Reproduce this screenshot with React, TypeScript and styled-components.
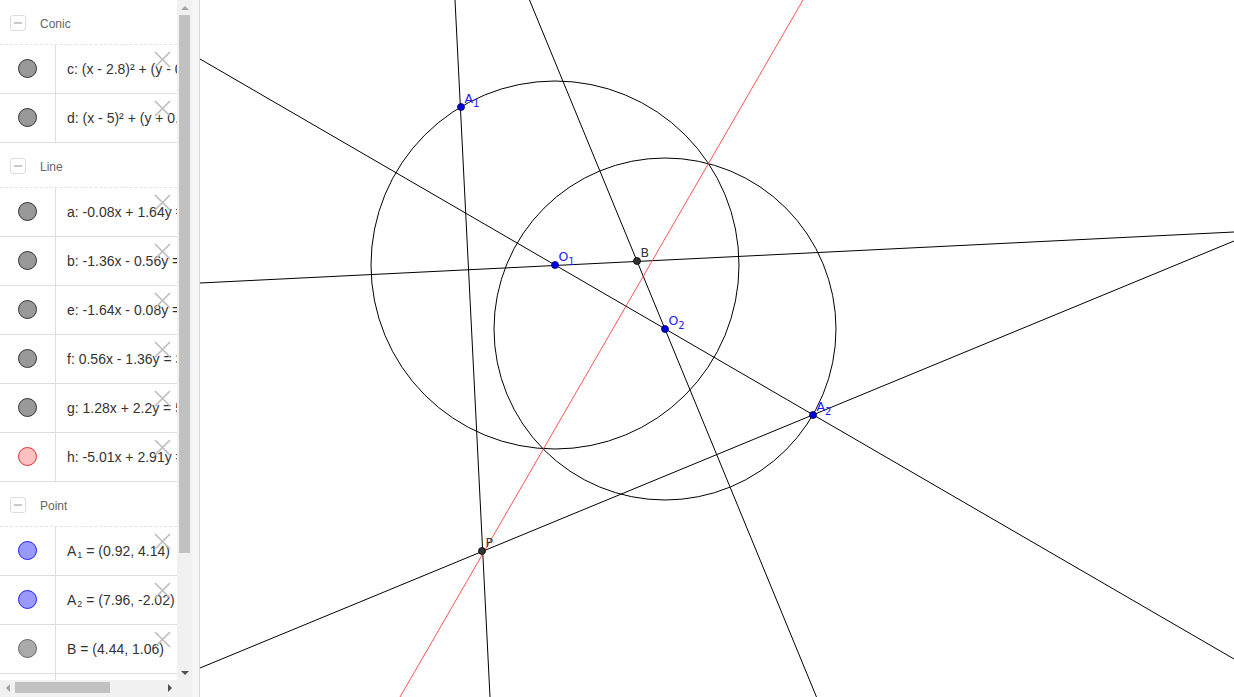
import React from "react";
import styled, { createGlobalStyle } from "styled-components";

const GlobalStyle = createGlobalStyle`
  html, body { margin: 0; padding: 0; background: #fff; }
  body { font-family: "Liberation Sans", Arial, sans-serif; overflow: hidden; }
  #root { width: 1234px; height: 697px; }
`;

const Page = styled.div`
  display: flex;
  width: 1234px;
  height: 697px;
  overflow: hidden;
  background: #fff;
`;

const Sidebar = styled.aside`
  display: flex;
  flex: 0 0 200px;
  height: 100%;
`;

const ListColumn = styled.div`
  display: flex;
  flex-direction: column;
  width: 177px;
  height: 100%;
`;

const ListViewport = styled.div`
  flex: 1;
  overflow: hidden;
  background: #fff;
`;

const GroupHeader = styled.div`
  display: flex;
  align-items: center;
  height: 44px;
  border-bottom: 1px dashed #e2e2e2;
  padding-left: 10px;
  gap: 14px;
  box-sizing: content-box;
`;

const CollapseBox = styled.span`
  position: relative;
  width: 14px;
  height: 14px;
  border: 1px solid #dcdcdc;
  border-radius: 3px;
  margin-top: 2px;
  &::after {
    content: "";
    position: absolute;
    left: 3px;
    right: 3px;
    top: 6px;
    height: 2px;
    background: #c8c8c8;
  }
`;

const GroupTitle = styled.span`
  font-size: 12px;
  color: #666;
  margin-top: 3px;
`;

const Row = styled.div`
  position: relative;
  display: grid;
  grid-template-columns: 56px 1fr;
  height: 48px;
  border-bottom: 1px solid #dedede;
  box-sizing: content-box;
`;

const MarkerCell = styled.div`
  display: flex;
  align-items: center;
  justify-content: center;
  border-right: 1px solid #dedede;
  padding-bottom: 2px;
`;

const Marker = styled.span<{ $fill: string; $stroke: string }>`
  width: 17px;
  height: 17px;
  border-radius: 50%;
  background: ${(p) => p.$fill};
  border: 1px solid ${(p) => p.$stroke};
`;

const Formula = styled.div`
  display: flex;
  align-items: center;
  padding-left: 11px;
  font-size: 14px;
  color: #333;
  white-space: nowrap;
  overflow: hidden;
`;

const FormulaText = styled.span`
  white-space: pre;
  sub {
    font-size: 9px;
    vertical-align: -2px;
    margin-left: 1px;
    line-height: 0;
  }
`;

const DeleteIcon = styled.svg`
  position: absolute;
  top: 6px;
  right: 6px;
  width: 17px;
  height: 17px;
`;

const HScroll = styled.div`
  display: flex;
  align-items: flex-start;
  height: 17px;
  background: #f1f1f1;
  padding-top: 2px;
  box-sizing: border-box;
`;

const HArrow = styled.div<{ $dark?: boolean; $dir: "left" | "right" }>`
  width: 15px;
  height: 11px;
  display: flex;
  align-items: center;
  justify-content: center;
  &::before {
    content: "";
    border-top: 4px solid transparent;
    border-bottom: 4px solid transparent;
    ${(p) =>
      p.$dir === "left"
        ? `border-right: 4px solid ${p.$dark ? "#505050" : "#a3a3a3"};`
        : `border-left: 4px solid ${p.$dark ? "#505050" : "#a3a3a3"};`}
  }
`;

const HThumb = styled.div`
  width: 95px;
  height: 11px;
  background: #c1c1c1;
`;

const HSpacer = styled.div`
  flex: 1;
`;

const VScroll = styled.div`
  display: flex;
  flex-direction: column;
  align-items: center;
  width: 15px;
  height: 100%;
  background: #f1f1f1;
`;

const VArrow = styled.div<{ $dark?: boolean; $dir: "up" | "down" }>`
  width: 15px;
  height: 15px;
  display: flex;
  align-items: center;
  justify-content: center;
  &::before {
    content: "";
    border-left: 4px solid transparent;
    border-right: 4px solid transparent;
    ${(p) =>
      p.$dir === "up"
        ? `border-bottom: 4px solid ${p.$dark ? "#505050" : "#a3a3a3"};`
        : `border-top: 4px solid ${p.$dark ? "#505050" : "#a3a3a3"};`}
  }
`;

const VThumb = styled.div`
  width: 11px;
  height: 538px;
  background: #c1c1c1;
`;

const VSpacer = styled.div`
  flex: 1;
`;

const VCorner = styled.div`
  height: 17px;
`;

const Gutter = styled.div`
  width: 7px;
  height: 100%;
  background: #f7f7f7;
  border-right: 1px solid #d6d6d6;
`;

const Canvas = styled.main`
  flex: 1;
  height: 100%;
  position: relative;
  svg {
    display: block;
  }
`;

type Item = {
  text: React.ReactNode;
  fill: string;
  stroke: string;
};

const GRAY = { fill: "#999999", stroke: "#333333" };
const RED = { fill: "#ffc0c0", stroke: "#e03030" };
const BLUE = { fill: "#9999ff", stroke: "#2020ff" };
const LGRAY = { fill: "#aaaaaa", stroke: "#666666" };

const groups: { title: string; items: Item[] }[] = [
  {
    title: "Conic",
    items: [
      { text: "c: (x - 2.8)² + (y - 0.98)² = 13.5", ...GRAY },
      { text: "d: (x - 5)² + (y + 0.3)² = 11.72", ...GRAY },
    ],
  },
  {
    title: "Line",
    items: [
      { text: "a: -0.08x + 1.64y = 1.39", ...GRAY },
      { text: "b: -1.36x - 0.56y = -6.63", ...GRAY },
      { text: "e: -1.64x - 0.08y = -4.67", ...GRAY },
      { text: "f: 0.56x - 1.36y = 3.21", ...GRAY },
      { text: "g: 1.28x + 2.2y = 5.74", ...GRAY },
      { text: "h: -5.01x + 2.91y = -9.42", ...RED },
    ],
  },
  {
    title: "Point",
    items: [
      { text: <>A<sub>1</sub> = (0.92, 4.14)</>, ...BLUE },
      { text: <>A<sub>2</sub> = (7.96, -2.02)</>, ...BLUE },
      { text: "B = (4.44, 1.06)", ...LGRAY },
      { text: <>O<sub>1</sub> = (2.8, 0.98)</>, ...BLUE },
    ],
  },
];

const Cross = () => (
  <DeleteIcon viewBox="0 0 17 17">
    <path d="M1 1 L16 16 M16 1 L1 16" stroke="#bdbdbd" strokeWidth="1.6" fill="none" />
  </DeleteIcon>
);

const lines: [number, number, number, number, string][] = [
  [455, 0, 490, 697, "#000"],
  [529.5, 0, 816.5, 697, "#000"],
  [200, 59, 1234, 659, "#000"],
  [200, 283, 1234, 232, "#000"],
  [200, 668, 1234, 241, "#000"],
  [803, 0, 400, 697, "#ff4040"],
];

type Pt = { x: number; y: number; label: string; sub?: string; blue: boolean };

const points: Pt[] = [
  { x: 461, y: 107, label: "A", sub: "1", blue: true },
  { x: 555, y: 265, label: "O", sub: "1", blue: true },
  { x: 637, y: 261, label: "B", blue: false },
  { x: 665, y: 329, label: "O", sub: "2", blue: true },
  { x: 813, y: 415, label: "A", sub: "2", blue: true },
  { x: 482, y: 551, label: "P", blue: false },
];

export default function App() {
  return (
    <>
      <GlobalStyle />
      <Page>
        <Sidebar>
          <ListColumn>
            <ListViewport>
              {groups.map((g) => (
                <React.Fragment key={g.title}>
                  <GroupHeader>
                    <CollapseBox />
                    <GroupTitle>{g.title}</GroupTitle>
                  </GroupHeader>
                  {g.items.map((it, i) => (
                    <Row key={i}>
                      <MarkerCell>
                        <Marker $fill={it.fill} $stroke={it.stroke} />
                      </MarkerCell>
                      <Formula>
                        <FormulaText>{it.text}</FormulaText>
                      </Formula>
                      <Cross />
                    </Row>
                  ))}
                </React.Fragment>
              ))}
            </ListViewport>
            <HScroll>
              <HArrow $dir="left" />
              <HThumb />
              <HSpacer />
              <HArrow $dir="right" $dark />
            </HScroll>
          </ListColumn>
          <VScroll>
            <VArrow $dir="up" />
            <VThumb />
            <VSpacer />
            <VArrow $dir="down" $dark />
            <VCorner />
          </VScroll>
          <Gutter />
        </Sidebar>
        <Canvas>
          <svg width="1034" height="697" viewBox="200 0 1034 697">
            <circle cx={555} cy={265} r={184} fill="none" stroke="#000" strokeWidth={1} />
            <circle cx={665} cy={329} r={171} fill="none" stroke="#000" strokeWidth={1} />
            {lines.map(([x1, y1, x2, y2, c], i) => (
              <line key={i} x1={x1} y1={y1} x2={x2} y2={y2} stroke={c} strokeWidth={c === "#000" ? 1 : 0.9} />
            ))}
            {points.map((p, i) => (
              <g key={i}>
                <circle
                  cx={p.x}
                  cy={p.y}
                  r={3.5}
                  fill={p.blue ? "#0000dd" : "#333"}
                  stroke={p.blue ? "#000066" : "#000"}
                  strokeWidth={0.8}
                />
                <text
                  x={p.x + 3.5}
                  y={p.y - 4}
                  fontFamily="'DejaVu Sans', sans-serif"
                  fontSize={12.5}
                  fill={p.blue ? "#1a1aff" : "#333"}
                >
                  {p.label}
                  {p.sub && (
                    <tspan fontSize={10} dy={4}>
                      {p.sub}
                    </tspan>
                  )}
                </text>
              </g>
            ))}
          </svg>
        </Canvas>
      </Page>
    </>
  );
}
